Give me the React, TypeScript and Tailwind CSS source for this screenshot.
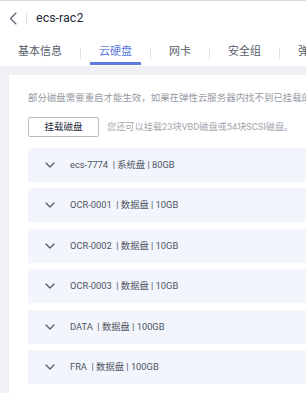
const tabs = ["基本信息", "云硬盘", "网卡", "安全组", "弹性公网IP"];

const disks = [
  { name: "ecs-7774", type: "系统盘", size: "80GB" },
  { name: "OCR-0001", type: "数据盘", size: "10GB" },
  { name: "OCR-0002", type: "数据盘", size: "10GB" },
  { name: "OCR-0003", type: "数据盘", size: "10GB" },
  { name: "DATA", type: "数据盘", size: "100GB" },
  { name: "FRA", type: "数据盘", size: "100GB" },
];

function ChevronDown() {
  return (
    <svg width="10" height="6" viewBox="0 0 10 6" fill="none" className="shrink-0">
      <path d="M1 1l4 4 4-4" stroke="#575d6c" strokeWidth="1.3" strokeLinecap="round" strokeLinejoin="round" />
    </svg>
  );
}

function App() {
  return (
    <div
      className="w-[306px] h-[393px] overflow-hidden bg-white flex flex-col border-t border-[#d5d8de]"
      style={{ fontFamily: 'Roboto, "Noto Sans CJK SC", sans-serif' }}
    >
      {/* header */}
      <div className="h-[35px] flex items-center pl-[9px] shrink-0">
        <svg width="8" height="13" viewBox="0 0 8 13" fill="none">
          <path d="M7 1L1.5 6.5 7 12" stroke="#575d6c" strokeWidth="1.1" strokeLinecap="round" strokeLinejoin="round" />
        </svg>
        <span className="ml-[9px] w-px h-[11px] bg-[#dfe1e6]" />
        <span className="ml-[9px] text-[12.5px] text-[#252b3a] leading-none">ecs-rac2</span>
      </div>

      {/* tabs */}
      <div className="h-[30px] flex items-start whitespace-nowrap shrink-0">
        {tabs.map((t, i) => (
          <div key={t} className="flex items-start shrink-0">
            {i > 0 && <span className="mt-[12px] w-px h-[11px] bg-[#dfe1e6]" />}
            <div
              className={
                i === 1
                  ? "mx-[9px] px-[9px] pt-[9px] pb-[3px] border-b-[3px] border-[#5e7ce0] text-[#5e7ce0] text-[11px] leading-[14px]"
                  : "mx-[9px] px-[9px] pt-[9px] pb-[3px] border-b-[3px] border-transparent text-[#575d6c] text-[11px] leading-[14px]"
              }
            >
              {t}
            </div>
          </div>
        ))}
      </div>

      {/* content */}
      <div className="flex-1 bg-[#eff1f5] pl-[9px] pt-[9px] flex flex-col">
        <div className="flex-1 bg-white pl-[19px] pt-[16px] whitespace-nowrap">
          <p className="text-[9.45px] leading-[14px] text-[#959aa4]">
            部分磁盘需要重启才能生效，如果在弹性云服务器内找不到已挂载的磁盘，请重启弹性云服务器。
          </p>

          <div className="mt-[12px] flex items-center">
            <button className="w-[71px] h-[20px] border border-[#b8bbc3] rounded-[2px] bg-white text-[9.5px] text-[#252b3a] flex items-center justify-center">
              挂载磁盘
            </button>
            <span className="ml-[8px] text-[9.2px] text-[#a3a6ae]">您还可以挂载23块VBD磁盘或54块SCSI磁盘。</span>
          </div>

          <div className="mt-[11px] flex flex-col gap-[6.4px]">
            {disks.map((d) => (
              <div key={d.name} className="h-[34px] bg-[#f2f5fc] flex items-center pl-[17px]">
                <ChevronDown />
                <span className="ml-[15px] text-[9.3px] text-[#4f5462] whitespace-pre">
                  {`${d.name}  | ${d.type} | ${d.size}`}
                </span>
              </div>
            ))}
          </div>
        </div>
      </div>
    </div>
  );
}

export default App;
